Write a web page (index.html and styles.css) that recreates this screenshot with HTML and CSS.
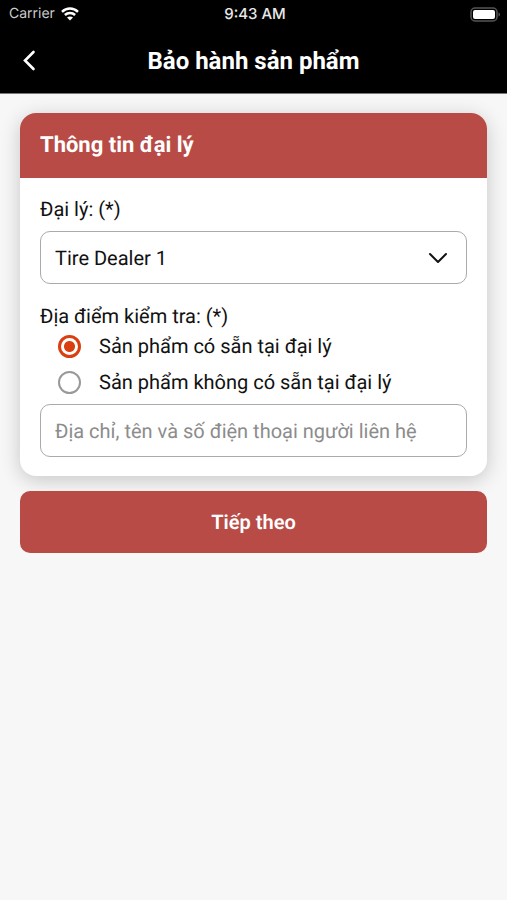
FILE: index.html
```html
<!DOCTYPE html>
<html lang="vi">
<head>
<meta charset="utf-8">
<meta name="viewport" content="width=device-width, initial-scale=1">
<title>Bảo hành sản phẩm</title>
<link rel="stylesheet" href="styles.css">
</head>
<body>
<header class="top">
  <div class="status">
    <div class="carrier">
      <span>Carrier</span>
      <svg width="18" height="14" viewBox="0 0 18 14" fill="none" stroke="#fff" stroke-width="2.5" aria-hidden="true">
        <path d="M1 4.8C5.5.5 12.500.5 17 4.800"/>
        <path d="M3.900 8C6.800 5.200 11.200 5.200 14.100 8"/>
        <path d="M9 13.500L6 10.600C7.700 9 10.300 9 12 10.600Z" fill="#fff" stroke="none"/>
      </svg>
    </div>
    <span class="time">9:43 AM</span>
    <svg class="battery" width="31" height="15" viewBox="0 0 31 15" aria-hidden="true">
      <rect x="1" y="1" width="26" height="13" rx="4" fill="#000" stroke="#555" stroke-width="1.500"/>
      <rect x="3" y="3" width="22" height="9" rx="2" fill="#fff"/>
      <path d="M28.500 5.500C30.500 6 30.500 9 28.500 9.500Z" fill="#555"/>
    </svg>
  </div>
  <div class="nav">
    <button class="back" type="button" aria-label="Quay lại">
      <svg width="14" height="22" viewBox="0 0 14 22" fill="none" stroke="#fff" stroke-width="2.600" stroke-linecap="round" aria-hidden="true"><path d="M10.500 2L2 10.500L10.500 19"/></svg>
    </button>
    <h1>Bảo hành sản phẩm</h1>
  </div>
</header>
<main>
  <form>
    <section class="card">
      <h2>Thông tin đại lý</h2>
      <div class="body">
        <label class="label" for="dealer">Đại lý: (*)</label>
        <div class="select">
          <select class="field" id="dealer"><option>Tire Dealer 1</option></select>
          <svg width="20" height="12" viewBox="0 0 20 12" fill="none" stroke="#111" stroke-width="2" stroke-linecap="round" stroke-linejoin="round" aria-hidden="true"><path d="M2 2L10 10L18 2"/></svg>
        </div>
        <fieldset>
          <legend class="label">Địa điểm kiểm tra: (*)</legend>
          <label class="option"><input type="radio" name="place" checked><span>Sản phẩm có sẵn tại đại lý</span></label>
          <label class="option"><input type="radio" name="place"><span>Sản phẩm không có sẵn tại đại lý</span></label>
        </fieldset>
        <input class="field" type="text" aria-label="Liên hệ" placeholder="Địa chỉ, tên và số điện thoại người liên hệ">
      </div>
    </section>
    <button class="next" type="submit">Tiếp theo</button>
  </form>
</main>
</body>
</html>
```
FILE: styles.css
```css
* { box-sizing: border-box; }

body {
  margin: 0;
  background: #f7f7f7;
  color: #111;
  font-family: Roboto, sans-serif;
  font-size: 20px;
  line-height: 24px;
  text-rendering: geometricPrecision;
}

.top {
  background: #000;
  color: #fff;
  border-bottom: 1px solid #777;
}

.status {
  display: grid;
  grid-template-columns: 1fr auto 1fr;
  align-items: center;
  height: 28px;
  padding: 0 6px 0 9px;
  font-family: Inter, sans-serif;
  font-size: 14px;
}

.carrier {
  display: flex;
  align-items: center;
  gap: 6px;
  color: #ccc;
}

.time {
  color: #e8e8e8;
  font-size: 15px;
  font-weight: 500;
}

.battery { justify-self: end; }

.nav {
  display: grid;
  grid-template-columns: 40px 1fr 40px;
  align-items: center;
  height: 65px;
  padding: 0 10px;
}

.back {
  display: flex;
  justify-content: center;
  padding: 8px;
  border: 0;
  background: none;
}

h1 {
  margin: 0;
  font-size: 24px;
  font-weight: 700;
  text-align: center;
}

main { padding: 19px 20px; }

.card {
  border-radius: 16px;
  background: #fff;
  box-shadow: 0 4px 20px rgba(0, 0, 0, 0.2);
}

h2 {
  margin: 0;
  padding: 21px 20px 20px;
  border-radius: 16px 16px 0 0;
  background: #b84b45;
  color: #fff;
  font-size: 22px;
  font-weight: 700;
  line-height: 24px;
}

.body { padding: 19px 20px; }

.label {
  display: block;
  padding: 0;
}

.select {
  display: grid;
  align-items: center;
  margin: 10px 0 20px;
}

.select > * { grid-area: 1 / 1; }

.select svg {
  justify-self: end;
  margin-right: 19px;
  pointer-events: none;
}

.field {
  display: block;
  width: 100%;
  height: 53px;
  padding: 0 14px;
  border: 1px solid #aaa;
  border-radius: 10px;
  background: #fff;
  color: #111;
  font: inherit;
  text-rendering: inherit;
  appearance: none;
}

.field::placeholder {
  color: #8c8c8c;
  opacity: 1;
}

fieldset {
  min-width: 0;
  margin: 0 0 4px;
  padding: 0;
  border: 0;
}

.option {
  display: flex;
  align-items: center;
  gap: 18px;
  height: 36px;
  padding-left: 18px;
}

.option input {
  width: 23px;
  height: 23px;
  margin: 0;
  border: 2px solid #999;
  border-radius: 50%;
  background: #fff;
  appearance: none;
}

.option input:checked {
  border-width: 3px;
  border-color: #d9400f;
  background: radial-gradient(circle, #d9400f 5px, #fff 6px);
}

.next {
  display: block;
  width: 100%;
  height: 62px;
  margin-top: 15px;
  border: 0;
  border-radius: 10px;
  background: #b84b45;
  color: #fff;
  font: inherit;
  font-weight: 600;
  text-rendering: inherit;
}
```
